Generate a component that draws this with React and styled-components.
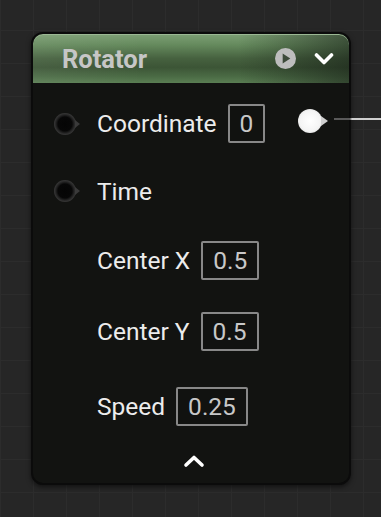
import React from "react";
import styled, { createGlobalStyle } from "styled-components";

const GlobalStyle = createGlobalStyle`
    html, body {
        margin: 0;
        padding: 0;
        background: #262626;
    }
    body {
        font-family: Roboto, "Liberation Sans", sans-serif;
    }
`;

const rows = [
    { label: "Coordinate", value: "0", pin: true, output: true, h: 67 },
    { label: "Time", pin: true, h: 68 },
    { label: "Center X", value: "0.5", h: 70 },
    { label: "Center Y", value: "0.5", h: 73 },
    { label: "Speed", value: "0.25", h: 76 },
];

const App = () => {
    return (
        <>
            <GlobalStyle />
            <Canvas>
                <Node>
                    <Header>
                        <Title>Rotator</Title>
                        <HeaderIcons>
                            <svg width="21" height="21" viewBox="0 0 20 20">
                                <circle cx="10" cy="10" r="10" fill="#bdbdbd" />
                                <path d="M7.3 5.2 L14.6 10 L7.3 14.8 Z" fill="#3d4a3a" />
                            </svg>
                            <svg width="20" height="14" viewBox="0 0 20 14">
                                <path
                                    d="M2.5 3 L10 10.5 L17.5 3"
                                    fill="none"
                                    stroke="#ffffff"
                                    strokeWidth="3.6"
                                    strokeLinecap="round"
                                    strokeLinejoin="round"
                                />
                            </svg>
                        </HeaderIcons>
                    </Header>
                    <Body>
                        {rows.map((r) => (
                            <Row key={r.label} $h={r.h}>
                                <PinSlot>{r.pin ? <InputPin /> : null}</PinSlot>
                                <Label>{r.label}</Label>
                                {r.value ? <ValueBox>{r.value}</ValueBox> : null}
                                {r.output ? (
                                    <>
                                        <OutputPin />
                                        <Wire />
                                    </>
                                ) : null}
                            </Row>
                        ))}
                    </Body>
                    <Footer>
                        <svg width="22" height="14" viewBox="0 0 22 14">
                            <path
                                d="M3 11 L11 3.5 L19 11"
                                fill="none"
                                stroke="#ffffff"
                                strokeWidth="3.6"
                                strokeLinecap="round"
                                strokeLinejoin="round"
                            />
                        </svg>
                    </Footer>
                </Node>
            </Canvas>
        </>
    );
};

export default App;

const Canvas = styled.div`
    width: 381px;
    height: 517px;
    box-sizing: border-box;
    padding: 32px 0 0 31px;
    overflow: hidden;
    background-color: #262626;
    background-image: linear-gradient(90deg, #2c2c2c 1px, transparent 1px),
        linear-gradient(180deg, #2c2c2c 1px, transparent 1px);
    background-size: 33px 33px;
    background-position: 0 -3px;
`;

const Node = styled.div`
    position: relative;
    width: 320px;
    height: 453px;
    box-sizing: border-box;
    border: 2px solid #0b0b0b;
    border-radius: 12px;
    background: #121311;
    box-shadow: 0 2px 5px rgba(0, 0, 0, 0.55);
    display: flex;
    flex-direction: column;
`;

const Header = styled.div`
    height: 49px;
    display: flex;
    align-items: center;
    justify-content: space-between;
    padding: 0 15px 0 29px;
    border-radius: 10px 10px 0 0;
    box-shadow: inset 0 1px 0 #9bb894;
    background: linear-gradient(90deg, rgba(255, 255, 255, 0.06) 0%, transparent 35%, transparent 65%, rgba(20, 26, 20, 0.55) 100%),
        linear-gradient(180deg, #7d9f75 0%, #658a5d 22%, #46613f 50%, #3c5536 68%, #4a6a44 86%, #5a7e53 100%);
`;

const Title = styled.span`
    font-size: 25.5px;
    font-weight: 700;
    color: #c6c6c6;
`;

const HeaderIcons = styled.div`
    display: flex;
    align-items: center;
    gap: 18px;
`;

const Body = styled.div`
    display: flex;
    flex-direction: column;
    padding-top: 7px;
`;

const Row = styled.div`
    position: relative;
    height: ${(p) => p.$h}px;
    display: flex;
    align-items: center;
    padding-left: 21px;
`;

const PinSlot = styled.div`
    width: 43px;
    height: 22px;
    display: flex;
    align-items: center;
`;

const InputPin = styled.div`
    position: relative;
    width: 22px;
    height: 22px;
    border-radius: 50%;
    background: radial-gradient(circle, #050505 0%, #070707 45%, #262626 60%, #3e3e3e 74%, #2c2c2c 88%, rgba(40, 40, 40, 0) 100%);

    &::after {
        content: "";
        position: absolute;
        left: 21px;
        top: 7px;
        border-left: 5px solid #3a3a3a;
        border-top: 4px solid transparent;
        border-bottom: 4px solid transparent;
    }
`;

const Label = styled.span`
    font-size: 24.5px;
    color: #ececec;
    margin-right: 11px;
`;

const ValueBox = styled.div`
    height: 39px;
    box-sizing: border-box;
    display: flex;
    align-items: center;
    padding: 0 10px;
    border: 2px solid #888888;
    border-radius: 2px;
    background: #111210;
    font-size: 24.5px;
    color: #c8c8c8;
`;

const OutputPin = styled.div`
    position: absolute;
    left: 265px;
    top: 50%;
    margin-top: -15px;
    width: 24px;
    height: 24px;
    border-radius: 50%;
    background: radial-gradient(circle, #ffffff 0%, #f4f4f4 60%, #d8d8d8 85%, rgba(200, 200, 200, 0.2) 100%);

    &::after {
        content: "";
        position: absolute;
        left: 23px;
        top: 7px;
        border-left: 7px solid #d0d0d0;
        border-top: 5px solid transparent;
        border-bottom: 5px solid transparent;
    }
`;

const Wire = styled.div`
    position: absolute;
    left: 301px;
    top: 50%;
    margin-top: -6px;
    width: 80px;
    height: 2px;
    background: linear-gradient(90deg, #5a5a5a 0px, #5a5a5a 16px, #cfcfcf 18px, #cfcfcf 100%);
`;

const Footer = styled.div`
    flex: 1;
    display: flex;
    align-items: flex-start;
    justify-content: center;
    padding: 10px 0 0 6px;
`;
